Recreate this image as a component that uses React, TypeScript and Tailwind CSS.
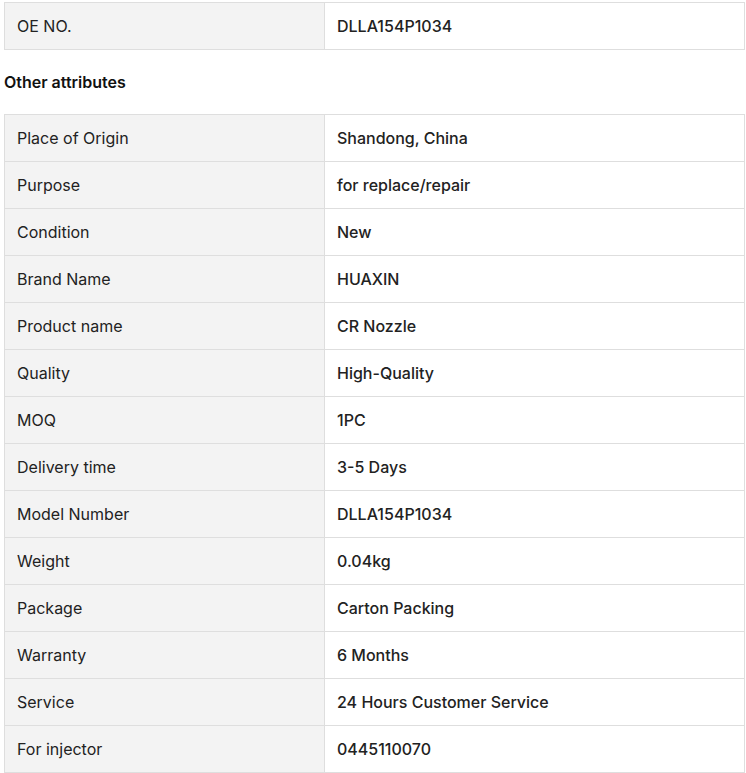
const main: [string, string][] = [["OE NO.", "DLLA154P1034"]];

const attrs: [string, string][] = [
  ["Place of Origin", "Shandong, China"],
  ["Purpose", "for replace/repair"],
  ["Condition", "New"],
  ["Brand Name", "HUAXIN"],
  ["Product name", "CR Nozzle"],
  ["Quality", "High-Quality"],
  ["MOQ", "1PC"],
  ["Delivery time", "3-5 Days"],
  ["Model Number", "DLLA154P1034"],
  ["Weight", "0.04kg"],
  ["Package", "Carton Packing"],
  ["Warranty", "6 Months"],
  ["Service", "24 Hours Customer Service"],
  ["For injector", "0445110070"],
];

function AttrTable({ rows }: { rows: [string, string][] }) {
  return (
    <table className="w-[741px] border-collapse table-fixed">
      <tbody>
        {rows.map(([k, v]) => (
          <tr key={k} className="h-[47px]">
            <td className="w-[320px] border border-[#dedede] bg-[#f3f3f3] px-3 text-base text-[#222]">{k}</td>
            <td className="border border-[#dedede] bg-white px-3 text-base font-medium text-[#222]">{v}</td>
          </tr>
        ))}
      </tbody>
    </table>
  );
}

export default function App() {
  return (
    <div className="bg-white pl-[4px] pt-[2px] font-['Inter',sans-serif]">
      <AttrTable rows={main} />
      <h3 className="h-[64px] flex items-center text-base font-semibold text-[#111]">Other attributes</h3>
      <AttrTable rows={attrs} />
    </div>
  );
}
